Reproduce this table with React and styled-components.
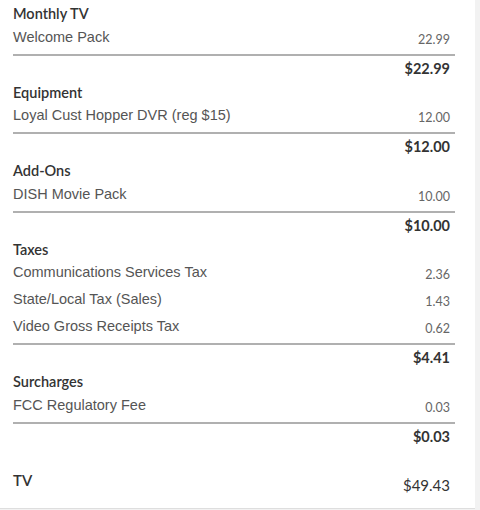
import React from 'react';
import styled, { createGlobalStyle } from 'styled-components';

const sections = [
  { title: 'Monthly TV', items: [['Welcome Pack', '22.99']], total: '$22.99' },
  { title: 'Equipment', items: [['Loyal Cust Hopper DVR (reg $15)', '12.00']], total: '$12.00' },
  { title: 'Add-Ons', items: [['DISH Movie Pack', '10.00']], total: '$10.00' },
  {
    title: 'Taxes',
    items: [
      ['Communications Services Tax', '2.36'],
      ['State/Local Tax (Sales)', '1.43'],
      ['Video Gross Receipts Tax', '0.62']
    ],
    total: '$4.41'
  },
  { title: 'Surcharges', items: [['FCC Regulatory Fee', '0.03']], total: '$0.03' }
];

function App() {
  return (
    <>
      <GlobalStyle />
      <Card>
        {sections.map((section) => (
          <Section key={section.title}>
            <Heading>{section.title}</Heading>
            {section.items.map(([label, amount]) => (
              <ItemRow key={label}>
                <ItemLabel>{label}</ItemLabel>
                <ItemAmount>{amount}</ItemAmount>
              </ItemRow>
            ))}
            <Divider />
            <TotalRow>{section.total}</TotalRow>
          </Section>
        ))}
        <GrandRow>
          <GrandLabel>TV</GrandLabel>
          <GrandAmount>$49.43</GrandAmount>
        </GrandRow>
      </Card>
    </>
  );
}

const GlobalStyle = createGlobalStyle`
  html, body {
    margin: 0;
    padding: 0;
    background: #f2f2f2;
  }
  * { box-sizing: border-box; }
`;

const Card = styled.div`
  width: 475px;
  height: 509px;
  background: #fff;
  border-bottom: 1px solid #dedede;
  padding: 4px 20px 0 13px;
`;

const Section = styled.section`
  padding-bottom: 4px;
`;

const Heading = styled.h3`
  margin: 0;
  font-family: Lato, "Liberation Sans", sans-serif;
  font-weight: 600;
  font-size: 14.5px;
  line-height: 20px;
  color: #333;
`;

const ItemRow = styled.div`
  display: flex;
  justify-content: space-between;
  align-items: flex-start;
  height: 27px;
  padding-top: 2.5px;
`;

const ItemLabel = styled.span`
  font-family: "Liberation Sans", Arial, sans-serif;
  font-size: 14.5px;
  line-height: 20px;
  color: #555;
`;

const ItemAmount = styled.span`
  margin-top: 3px;
  margin-right: 5px;
  font-family: Lato, "Liberation Sans", sans-serif;
  font-size: 12.5px;
  line-height: 20px;
  color: #666;
`;

const Divider = styled.hr`
  margin: 2.5px 0 3px;
  border: 0;
  height: 2px;
  background: #b0b0b0;
`;

const TotalRow = styled.div`
  text-align: right;
  padding-right: 5px;
  font-family: Lato, "Liberation Sans", sans-serif;
  font-weight: 700;
  font-size: 14.5px;
  line-height: 20px;
  color: #333;
`;

const GrandRow = styled.div`
  display: flex;
  justify-content: space-between;
  align-items: flex-start;
  margin-top: 19.5px;
  padding-right: 5px;
`;

const GrandLabel = styled.span`
  font-family: Lato, "Liberation Sans", sans-serif;
  font-weight: 600;
  font-size: 15px;
  line-height: 20px;
  color: #333;
`;

const GrandAmount = styled.span`
  margin-top: 5px;
  font-family: Lato, "Liberation Sans", sans-serif;
  font-weight: 400;
  font-size: 15px;
  line-height: 20px;
  color: #333;
`;

export default App;
